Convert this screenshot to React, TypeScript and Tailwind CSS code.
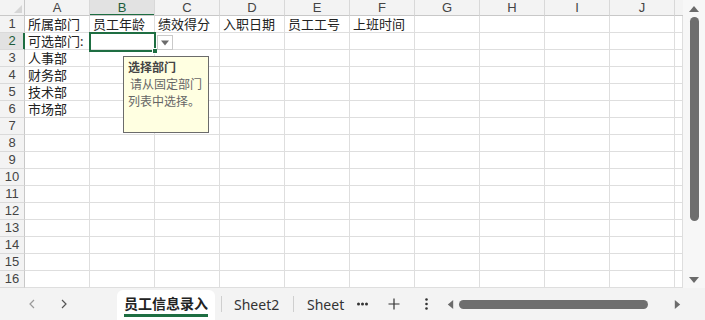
import React from 'react';

const cols = ['A', 'B', 'C', 'D', 'E', 'F', 'G', 'H', 'I', 'J'];

const cellText: Record<string, string> = {
  A1: '所属部门',
  B1: '员工年龄',
  C1: '绩效得分',
  D1: '入职日期',
  E1: '员工工号',
  F1: '上班时间',
  A2: '可选部门:',
  A3: '人事部',
  A4: '财务部',
  A5: '技术部',
  A6: '市场部',
};

const font = { fontFamily: '"Noto Sans", "Noto Sans CJK SC", "Liberation Sans", sans-serif' };

function Tri({ dir, className }: { dir: 'up' | 'down' | 'left' | 'right'; className?: string }) {
  const pts = {
    up: '0,8 5,2 10,8',
    down: '0,2 5,8 10,2',
    left: '8,0 2,5 8,10',
    right: '2,0 8,5 2,10',
  }[dir];
  return (
    <svg viewBox="0 0 10 10" className={className}>
      <polygon points={pts} fill="#6b6b6b" />
    </svg>
  );
}

export default function App() {
  const rows = Array.from({ length: 16 }, (_, i) => i + 1);

  return (
    <div className="w-[705px] h-[320px] bg-white overflow-hidden flex flex-col text-[#222]" style={font}>
      <div className="flex h-[288px]">
        {/* Grid */}
        <div className="relative w-[683px] h-[288px] grid grid-cols-[25px_repeat(10,65px)_8px] grid-rows-[16px_repeat(16,17px)]">
          <div className="bg-[#f3f3f3] border-r border-b border-[#c8c8c8] relative">
            <svg viewBox="0 0 10 10" className="absolute right-[2px] bottom-[2px] w-[8px] h-[8px]">
              <polygon points="10,0 10,10 0,10" fill="#d6d6d6" />
            </svg>
          </div>
          {cols.map((c) => (
            <div
              key={c}
              className={`flex items-center justify-center font-['Liberation_Sans',sans-serif] text-[13px] leading-[15px] border-r border-b border-[#d8d8d8] border-b-[#c8c8c8] ${
                c === 'B'
                  ? 'bg-[#e2e2e2] shadow-[inset_0_-1px_0_#1e6e42] border-b-[#1e6e42] text-[#1e5c3a]'
                  : 'bg-[#f3f3f3] text-[#444]'
              }`}
            >
              {c}
            </div>
          ))}
          <div className="bg-[#f3f3f3] border-b border-[#c8c8c8]" />

          {rows.map((r) => (
            <React.Fragment key={r}>
              <div
                className={`flex items-center justify-center font-['Liberation_Sans',sans-serif] text-[13px] leading-[16px] border-b border-r border-[#dadada] ${
                  r === 2
                    ? 'bg-[#e2e2e2] border-r-[#1e6e42] shadow-[inset_-1px_0_0_#1e6e42] text-[#1e5c3a]'
                    : 'bg-[#f3f3f3] border-r-[#c8c8c8] text-[#444]'
                }`}
              >
                {r}
              </div>
              {cols.map((c) => (
                <div
                  key={c}
                  className="border-r border-b border-[#dedede] text-[13px] leading-[16px] pl-[3px] whitespace-nowrap"
                >
                  {cellText[`${c}${r}`] ?? ''}
                </div>
              ))}
              <div className="border-r border-b border-[#dedede]" />
            </React.Fragment>
          ))}

          {/* Selected cell B2 */}
          <div className="absolute left-[89px] top-[32px] w-[67px] h-[20px] border-2 border-[#1e6e42]" />
          <div className="absolute left-[152px] top-[48px] w-[6px] h-[6px] bg-[#1e6e42] border border-white" />

          {/* Dropdown button */}
          <div className="absolute left-[157px] top-[35px] w-[16px] h-[15px] bg-white border border-[#c9c9c9] flex items-center justify-center">
            <Tri dir="down" className="w-[8px] h-[8px]" />
          </div>

          {/* Input message tooltip */}
          <div className="absolute left-[123px] top-[56px] w-[86px] h-[77px] bg-[#ffffe1] border border-[#6b6b6b] px-[4px] pt-[2px] text-[12px] leading-[17px]">
            <div className="font-bold text-[#444]">选择部门</div>
            <div className="text-[#666] pl-[2px]">请从固定部门</div>
            <div className="text-[#666]">列表中选择。</div>
          </div>
        </div>

        {/* Vertical scrollbar */}
        <div className="w-[22px] h-[288px] bg-[#f7f7f7] flex flex-col items-center">
          <Tri dir="up" className="w-[10px] h-[10px] mt-[4px]" />
          <div className="w-[9px] h-[204px] mt-[3px] rounded-full bg-[#6e6e6e]" />
          <div className="flex-1" />
          <Tri dir="down" className="w-[10px] h-[10px] mb-[3px]" />
        </div>
      </div>

      {/* Tab bar */}
      <div className="h-[32px] bg-[#f3f3f3] flex items-center text-[14px] text-[#333]">
        <div className="w-[117px] flex items-center pl-[27px] gap-[22px]">
          <svg viewBox="0 0 10 10" className="w-[10px] h-[10px]">
            <polyline points="7,1 3,5 7,9" fill="none" stroke="#9a9a9a" strokeWidth="1.2" />
          </svg>
          <svg viewBox="0 0 10 10" className="w-[10px] h-[10px]">
            <polyline points="3,1 7,5 3,9" fill="none" stroke="#555" strokeWidth="1.2" />
          </svg>
        </div>
        <div className="h-[30px] mt-[1px] w-[98px] bg-white rounded-t-[6px] flex flex-col items-center justify-center">
          <span className="font-bold text-[14px] leading-[18px] text-[#222] border-b-[3px] border-[#1e6e42] pb-[1px] mt-[3px]">
            员工信息录入
          </span>
        </div>
        <div className="w-px h-[16px] bg-[#cfcfcf] ml-[6px]" />
        <span className="ml-[12px] w-[47px]">Sheet2</span>
        <div className="w-px h-[16px] bg-[#cfcfcf] ml-[12px]" />
        <span className="ml-[13px] w-[39px]">Sheet</span>
        <svg viewBox="0 0 11 4" className="ml-[11px] w-[11px] h-[4px]">
          <circle cx="1.5" cy="2" r="1.5" fill="#333" />
          <circle cx="5.5" cy="2" r="1.5" fill="#333" />
          <circle cx="9.5" cy="2" r="1.5" fill="#333" />
        </svg>
        <svg viewBox="0 0 12 12" className="ml-[20px] w-[12px] h-[12px]">
          <path d="M6 0.5V11.5M0.5 6H11.5" stroke="#333" strokeWidth="1.2" />
        </svg>
        <svg viewBox="0 0 3 12" className="ml-[25px] w-[3px] h-[12px]">
          <circle cx="1.5" cy="1.5" r="1.3" fill="#333" />
          <circle cx="1.5" cy="6" r="1.3" fill="#333" />
          <circle cx="1.5" cy="10.5" r="1.3" fill="#333" />
        </svg>
        <Tri dir="left" className="ml-[18px] w-[9px] h-[9px]" />
        <div className="ml-[4px] w-[189px] h-[9px] rounded-full bg-[#6e6e6e]" />
        <Tri dir="right" className="ml-[25px] w-[9px] h-[9px]" />
      </div>
    </div>
  );
}
